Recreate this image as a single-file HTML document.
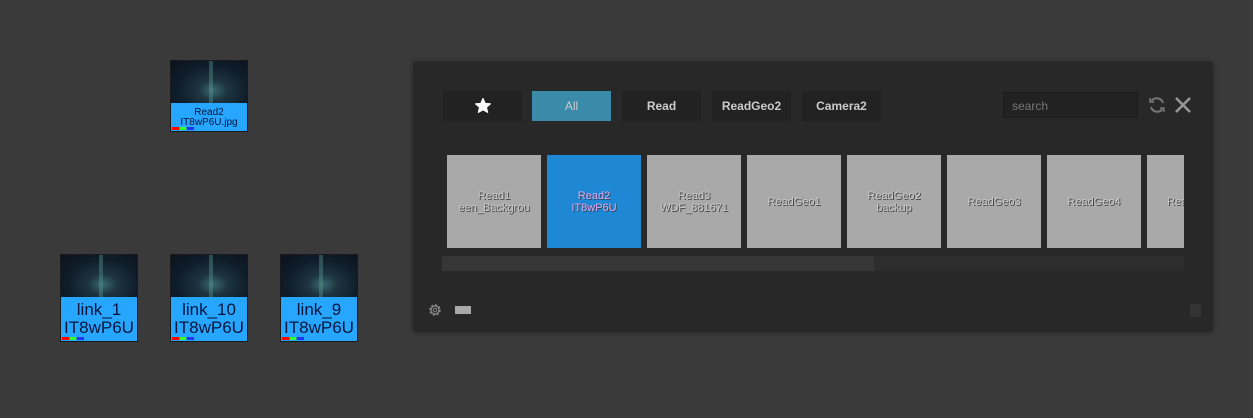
<!DOCTYPE html><html><head><style>
body{margin:0;width:1253px;height:418px;background:#3a3a3a;position:relative;overflow:hidden;font-family:"Liberation Sans",sans-serif}
.a{position:absolute}
.node{position:absolute;width:76px;background:#27a6ff;border:1px solid #1a1a1a;text-align:center;color:#05143a;overflow:hidden}
.img{height:42px;background:radial-gradient(ellipse at 55% 70%,#3a6a70 0,#1d3440 25%,#0f1d2a 60%,#0a121c 100%);position:relative}
.img:after{content:"";position:absolute;left:38px;top:0;width:4px;height:42px;background:#5a9a90;opacity:.4}
.bar{position:absolute;left:1px;bottom:1px;height:3px;width:22px;background:linear-gradient(90deg,#f00 0 33%,#3f3 33% 66%,#23f 66%)}
.btn{position:absolute;top:91px;width:79px;height:30px;background:#222;color:#ccc;font-size:12px;font-weight:bold;line-height:30px;text-align:center}
.tile{position:absolute;top:0;width:94px;height:93px;background:#a9a9a9;color:#c8c8c8;font-size:11px;line-height:12px;display:flex;align-items:center;justify-content:center;text-align:center;text-shadow:1px 1px 0 #444;white-space:nowrap;overflow:hidden}
</style></head><body>
<div class="node" style="left:170px;top:60px;height:70px"><div class="img"></div><div style="font-size:10px;line-height:10px;margin-top:5px">Read2<br>IT8wP6U.jpg</div><div class="bar"></div></div>
<div class="node" style="left:60px;top:254px;height:86px"><div class="img"></div><div style="font-size:17px;line-height:18px;margin-top:4px">link_1<br>IT8wP6U</div><div class="bar"></div></div>
<div class="node" style="left:170px;top:254px;height:86px"><div class="img"></div><div style="font-size:17px;line-height:18px;margin-top:4px">link_10<br>IT8wP6U</div><div class="bar"></div></div>
<div class="node" style="left:280px;top:254px;height:86px"><div class="img"></div><div style="font-size:17px;line-height:18px;margin-top:4px">link_9<br>IT8wP6U</div><div class="bar"></div></div>

<div class="a" style="left:413px;top:62px;width:800px;height:270px;background:#282828;border-radius:3px;box-shadow:0 0 4px #222;overflow:hidden">
</div>
<div class="btn" style="left:443px"><svg width="18" height="18" viewBox="0 0 24 24" style="margin-top:6px"><path d="M12 2l2.9 6.5 7 .6-5.3 4.6 1.6 6.9L12 17l-6.2 3.6 1.6-6.9L2.1 9.1l7-.6z" fill="#fff" stroke="#fff" stroke-linejoin="round" stroke-width="1.5"/></svg></div>
<div class="btn" style="left:532px;background:#3a8aaa;font-weight:normal">All</div>
<div class="btn" style="left:622px">Read</div>
<div class="btn" style="left:712px">ReadGeo2</div>
<div class="btn" style="left:802px">Camera2</div>
<div class="a" style="left:1003px;top:92px;height:26px;background:#222;border:1px solid #1c1c1c;color:#777;font-size:12px;line-height:26px;padding-left:8px;box-sizing:border-box;width:135px">search</div>
<svg class="a" style="left:1148px;top:96px" width="18" height="18" viewBox="0 0 18 18"><path d="M15 7A6.5 6.5 0 0 0 3.5 5M3 11a6.5 6.5 0 0 0 11.5 2" fill="none" stroke="#777" stroke-width="2"/><path d="M2 2v4h4M16 16v-4h-4" fill="none" stroke="#777" stroke-width="1.5"/></svg>
<svg class="a" style="left:1174px;top:96px" width="18" height="18"><path d="M2 2L16 16M16 2L2 16" stroke="#999" stroke-width="2.5"/></svg>
<div class="a" style="left:440px;top:155px;width:744px;height:93px;overflow:hidden">
<div class="tile" style="left:7px">Read1<br>een_Backgrou</div>
<div class="tile" style="left:107px;background:#1e88d4;color:#e0a8f0;text-shadow:1px 1px 0 #345">Read2<br>IT8wP6U</div>
<div class="tile" style="left:207px">Read3<br>WDF_881671</div>
<div class="tile" style="left:307px">ReadGeo1</div>
<div class="tile" style="left:407px">ReadGeo2<br>backup</div>
<div class="tile" style="left:507px">ReadGeo3</div>
<div class="tile" style="left:607px">ReadGeo4</div>
<div class="tile" style="left:707px;justify-content:flex-start;padding-left:20px;box-sizing:border-box">Rea</div>
</div>
<div class="a" style="left:442px;top:256px;width:742px;height:15px;background:#2d2d2d"></div>
<div class="a" style="left:442px;top:256px;width:432px;height:15px;background:#363636"></div>
<svg class="a" style="left:427px;top:302px" width="16" height="16" viewBox="0 0 16 16"><circle cx="8" cy="8" r="5" fill="none" stroke="#888" stroke-width="1.5" stroke-dasharray="2.2 1.7"/><circle cx="8" cy="8" r="4" fill="none" stroke="#888" stroke-width="1.2"/><circle cx="8" cy="8" r="1.8" fill="none" stroke="#888"/></svg>
<div class="a" style="left:455px;top:306px;width:16px;height:8px;background:#aaa"></div>
<div class="a" style="left:1190px;top:304px;width:11px;height:13px;background:#333"></div>
</body></html>
